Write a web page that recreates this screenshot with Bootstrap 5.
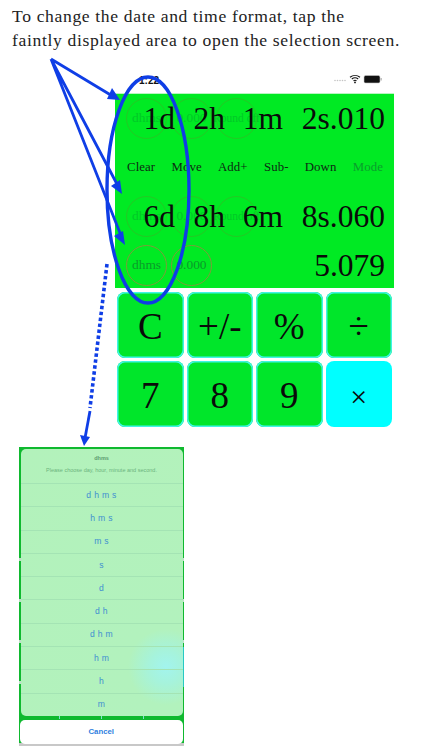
<!DOCTYPE html>
<html lang="en">
<head>
<meta charset="utf-8">
<title>Date and time format</title>
<link href="https://cdn.jsdelivr.net/npm/bootstrap@5.3.0/dist/css/bootstrap.min.css" rel="stylesheet">
<style>
html,body{margin:0;background:#fff;}
.stage{position:relative;width:422px;height:750px;overflow:hidden;font-family:"Liberation Serif",serif;color:#111;}
.intro{padding:4px 0 0 12px;font-size:17.6px;line-height:24px;letter-spacing:.64px;height:58px;white-space:nowrap;color:#222;}
.phone{margin-left:115px;width:279px;}
.statusline{height:35px;position:relative;font-family:"Liberation Sans",sans-serif;}
.clock{position:absolute;left:24px;top:15px;font-size:10px;font-weight:600;color:#111;}
.status-icons{position:absolute;right:12px;top:16px;}
.panel{background:#00ea23;height:195px;padding:4px 0 0 11px;border-top:1px solid #b9f5c2;}
.stack{display:grid;height:41px;}
.stack>*{grid-area:1/1;}
.faint{display:flex;gap:4px;}
.ring{width:41px;height:41px;flex:none;border:1px solid rgba(90,150,40,.4);border-radius:50%;display:flex;align-items:center;justify-content:center;font-size:13.4px;color:#00c827;white-space:nowrap;}
.ring.small-text{font-size:11.5px;}
.ring.on{border-color:#7f9a3a;color:#0a9a2a;}
.bigline{font-size:31.5px;line-height:41px;color:#0a0a0a;display:grid;grid-template-columns:49px 50px 58px 102px;text-align:right;}
.lastline{font-size:31.5px;line-height:41px;color:#0a0a0a;text-align:right;padding-right:9px;}
.tools{display:flex;height:49px;margin:4px 0 4px 1px;align-items:center;font-size:12.8px;color:#0d2a12;padding-right:11px;justify-content:space-between;letter-spacing:.1px;}
.tools .off{color:#0a9e2c;}
.keys{display:grid;grid-template-columns:repeat(4,66.5px);gap:3px;margin:4px 0 0 2px;}
.calc-key{height:66px;border-radius:8px;background:#00e62a;box-shadow:inset 0 0 0 1.5px #3ff5e6;display:flex;align-items:center;justify-content:center;font-size:37px;color:#0a0a0a;padding-top:3px;}
.calc-key.hot{background:#00ffff;box-shadow:none;font-size:30px;padding-top:5px;}
.sheet{margin:20px 0 0 18.5px;width:165.5px;height:299px;padding:2px 1.5px 0 2px;position:relative;font-family:"Liberation Sans",sans-serif;
background:
 linear-gradient(#27c9c4,#27c9c4) right 200px/2px 40px no-repeat,
 repeating-linear-gradient(180deg,#0fb92f 0 38px,#bfdcc8 38px 41px) 0 73px/100% 200px no-repeat,
 #0fb92f;}
.sheet-card{height:267px;border-radius:5px;background:radial-gradient(circle at 145px 218px,#a2f4ee 0,#a6f3dc 16px,#b2f2bd 38px,#b3f2bb 100%);display:flex;flex-direction:column;overflow:hidden;}
.sheet-head{height:35px;text-align:center;color:#6cb47e;font-size:5.5px;line-height:6px;padding-top:6px;border-bottom:1px solid #a4e4b4;}
.sheet-head div:first-child{margin-bottom:6px;font-weight:600;color:#5d9c70;}
.pick{flex:1;display:flex;align-items:center;justify-content:center;font-size:8.6px;color:#3f8fd0;letter-spacing:.3px;border-bottom:1px solid #a4e4b4;}
.pick:last-child{border-bottom:0;}
.cancel-wrap{height:30px;padding-top:3.5px;margin:0 -1.5px 0 -2px;padding-inline:1.5px 1.5px;
background:
 repeating-linear-gradient(90deg,transparent 0 40.5px,#7fe0d0 40.5px 41.5px,transparent 41.5px 42px) 0 0/100% 3px no-repeat,
 linear-gradient(#0fb92f 27px,#c8c8c8 27px);}
.cancel{height:24px;background:#fff;border-radius:5px;display:flex;align-items:center;justify-content:center;color:#2f7fe0;font-size:7.8px;font-weight:600;}
.marks{position:absolute;left:0;top:0;pointer-events:none;}
</style>
</head>
<body>
<div class="stage">
  <div class="intro">To change the date and time format, tap the<br>faintly displayed area to open the selection screen.</div>
  <div class="phone">
    <div class="statusline">
      <span class="clock">1:22</span>
      <svg class="status-icons" width="48" height="10" viewBox="0 0 48 10">
        <g fill="#c4c4c4"><circle cx="1" cy="6.5" r=".8"/><circle cx="3.5" cy="6.5" r=".8"/><circle cx="6" cy="6.5" r=".8"/><circle cx="8.5" cy="6.5" r=".8"/><circle cx="11" cy="6.5" r=".8"/></g>
        <path d="M16 3.2a8 8 0 0 1 10 0M17.8 5a5.2 5.2 0 0 1 6.4 0M19.5 6.8a2.6 2.6 0 0 1 3 0" fill="none" stroke="#111" stroke-width="1.1"/><circle cx="21" cy="8.4" r=".9" fill="#111"/>
        <rect x="30" y="1.5" width="16" height="7.5" rx="1.6" fill="#111" stroke="#c8c8c8" stroke-width=".6"/><rect x="46.6" y="4" width="1" height="2.5" fill="#999"/>
      </svg>
    </div>
    <div class="panel">
      <div class="stack">
        <div class="faint"><div class="ring">dhms</div><div class="ring">0.000</div><div class="ring small-text">Round off</div></div>
        <div class="bigline"><span>1d</span><span>2h</span><span>1m</span><span>2s.010</span></div>
      </div>
      <div class="tools"><span>Clear</span><span>Move</span><span>Add+</span><span>Sub-</span><span>Down</span><span class="off">Mode</span></div>
      <div class="stack">
        <div class="faint"><div class="ring">dhms</div><div class="ring">0.000</div><div class="ring small-text">Round off</div></div>
        <div class="bigline"><span>6d</span><span>8h</span><span>6m</span><span>8s.060</span></div>
      </div>
      <div class="stack mt-2">
        <div class="faint"><div class="ring on">dhms</div><div class="ring on">0.000</div></div>
        <div class="lastline">5.079</div>
      </div>
    </div>
    <div class="keys">
      <div class="calc-key">C</div><div class="calc-key">+/-</div><div class="calc-key">%</div><div class="calc-key">÷</div>
      <div class="calc-key">7</div><div class="calc-key">8</div><div class="calc-key">9</div><div class="calc-key hot">×</div>
    </div>
  </div>
  <div class="sheet">
    <div class="sheet-card">
      <div class="sheet-head"><div>dhms</div><div>Please choose day, hour, minute and second.</div></div>
      <div class="pick">d h m s</div><div class="pick">h m s</div><div class="pick">m s</div><div class="pick">s</div><div class="pick">d</div><div class="pick">d h</div><div class="pick">d h m</div><div class="pick">h m</div><div class="pick">h</div><div class="pick">m</div>
    </div>
    <div class="cancel-wrap"><div class="cancel">Cancel</div></div>
  </div>
  <svg class="marks" width="422" height="750" viewBox="0 0 422 750">
    <g fill="none" stroke="#0f3ee6">
      <ellipse cx="148" cy="190" rx="41" ry="113" stroke-width="3.4"/>
      <path d="M51 59 114 97M51 59 118 186M51 59 122 238" stroke-width="2.8"/>
      <path d="M107 264 90 408" stroke-width="3.6" stroke-dasharray="3.5 2.5"/>
      <path d="M90 411 85 438" stroke-width="2.8"/>
    </g>
    <g fill="#0f3ee6">
      <path d="M120 100 112 88 107 99Z"/>
      <path d="M122 194 120 180 111 186Z"/>
      <path d="M125 245 123 231 114 236Z"/>
      <path d="M84 446 80 435 90 437Z"/>
    </g>
  </svg>
</div>
<script src="https://cdn.jsdelivr.net/npm/bootstrap@5.3.0/dist/js/bootstrap.bundle.min.js"></script>
</body>
</html>
